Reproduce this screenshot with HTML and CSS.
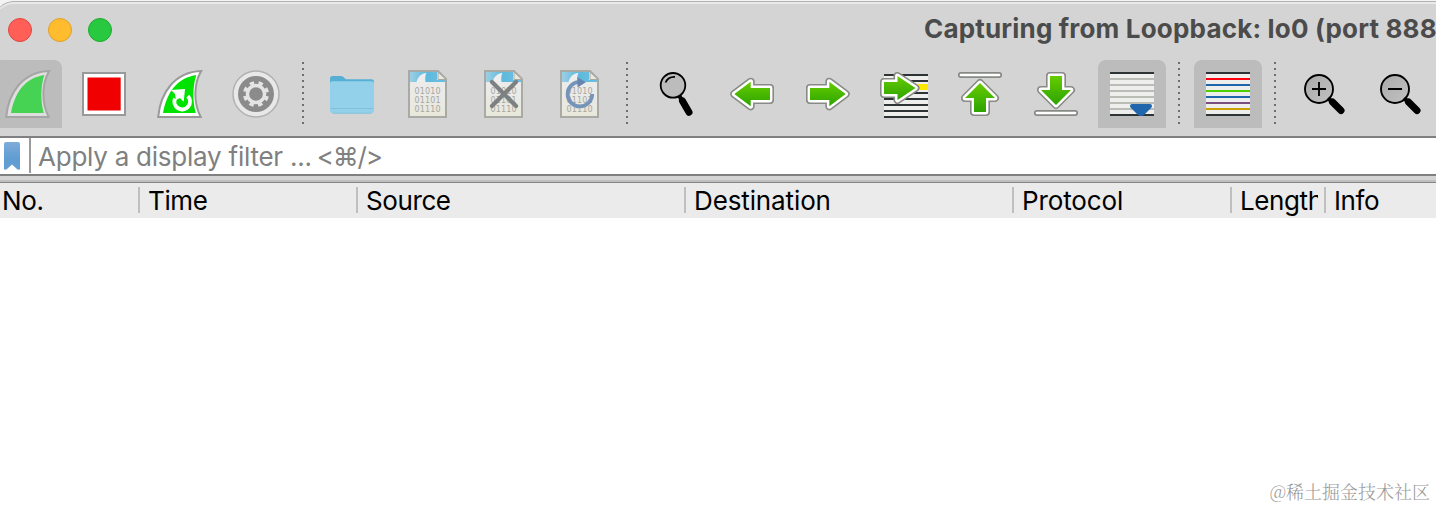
FILE: index.html
```html
<!DOCTYPE html>
<html lang="en">
<head>
<meta charset="utf-8">
<title>Capturing from Loopback: lo0</title>
<link rel="stylesheet" href="styles.css">
</head>
<body>
<svg class="defs" width="0" height="0" aria-hidden="true">
  <defs>
    <linearGradient id="green" x1="0" y1="0" x2="0" y2="1"><stop offset="0" stop-color="#66cc00"/><stop offset="1" stop-color="#2ca300"/></linearGradient>
    <linearGradient id="lens" x1="0" y1="0" x2="1" y2="1"><stop offset="0" stop-color="#a9a9a9"/><stop offset="1" stop-color="#c2c2c2"/></linearGradient>
    <linearGradient id="paper" x1="0" y1="0" x2="0" y2="1"><stop offset="0" stop-color="#ececec"/><stop offset=".5" stop-color="#eaeae8"/><stop offset="1" stop-color="#e8e8d9"/></linearGradient>
    <linearGradient id="sea" x1="0" y1="0" x2="1" y2="0"><stop offset="0" stop-color="#9dcfe4"/><stop offset=".6" stop-color="#5eb9dd"/><stop offset="1" stop-color="#67bddf"/></linearGradient>
    <linearGradient id="mark" x1="0" y1="0" x2="0" y2="1"><stop offset="0" stop-color="#7fabd9"/><stop offset=".6" stop-color="#5f9dd2"/><stop offset="1" stop-color="#669fd2"/></linearGradient>
    <g id="doc">
      <path d="M15 11H44L52 19V57H15Z" fill="url(#paper)"/>
      <path d="M16 12H43V22H16Z" fill="url(#sea)"/><path d="M43 20H51V22H43Z" fill="#67bddf"/>
      <path d="M22.5 22C24 17 27 13.5 32.5 12.8C31 16 31 19 31.5 22Z" fill="#eee"/>
      <path d="M15 11H44L52 19V57H15Z" fill="none" stroke="#a9aaa5" stroke-width="2"/>
      <path d="M44 12V19.5H52Z" fill="#e8e8df" stroke="#a9aaa5"/>
      <g class="bits"><text x="20.5" y="34.2" textLength="26">01010</text><text x="20.5" y="43.2" textLength="26">01101</text><text x="20.5" y="52.2" textLength="26">01110</text></g>
    </g>
    <path id="arr" d="M16 28H35.3V21.7L51.7 34L35.3 46.3V40H16Z"/>
    <path id="go" d="M14 22H27.5V16L45.5 28L27.5 40V34H14Z"/>
    <path id="up" d="M34 23L49 38H40V52H28V38H19Z"/>
    <path id="down" d="M34 45L49 30H40V16H28V30H19Z"/>
    <path id="fin" d="M12.2 57C14.5 32 29 12 55.2 11C47.5 24 47.5 43 54.7 57Z"/>
  </defs>
</svg>
<main class="window">
  <header class="titlebar">
    <span class="light red"></span><span class="light yellow"></span><span class="light green"></span>
    <h1 class="title">Capturing from Loopback: lo0 (port 888</h1>
  </header>
  <nav class="toolbar">
    <button class="tool on"><svg viewBox="0 0 68 68"><use href="#fin" fill="#dedede" stroke="#a5a5a5" stroke-width="2"/><path d="M17 53C21 32 31 18 50.3 15C46.5 27 46.5 41 49.8 53Z" fill="#46d252"/></svg></button>
    <button class="tool"><svg viewBox="0 0 68 68"><path d="M13 13H55V55H13Z" fill="#fff" stroke="#999" stroke-width="2"/><path d="M17.5 17.5H50.7V50.5H17.5Z" fill="#f00000"/></svg></button>
    <button class="tool"><svg viewBox="0 0 68 68"><use href="#fin" fill="#fff" stroke="#999" stroke-width="2"/><path d="M17 53C21 32 31 18 50.3 15C46.5 27 46.5 41 49.8 53Z" fill="#00e300"/><path d="M41.8 36.2A7.8 7.8 0 1 1 29 38.5" fill="none" stroke="#fff" stroke-width="4"/><path d="M25 30L39 29L37.7 41.8L34 38L30 40L29 34Z" fill="#fff"/></svg></button>
    <button class="tool"><svg viewBox="0 0 68 68"><circle cx="34" cy="34" r="23" fill="#e8e8e8" stroke="#b1b1b1" stroke-width="1.5"/><circle cx="34" cy="34" r="18" fill="#8b8b8b"/><circle cx="34" cy="34" r="8.6" fill="none" stroke="#e4e4e4" stroke-width="3.5"/><circle cx="34" cy="34" r="11.3" fill="none" stroke="#e4e4e4" stroke-width="3.4" stroke-dasharray="4.4 4.475" stroke-dashoffset="-2.2"/></svg></button>
    <i class="divider"></i>
    <button class="tool"><svg viewBox="0 0 68 68"><path d="M12 18.5Q12 16 14.5 16H23Q25 16 26.5 18Q27.5 19.3 29 19.3H53.5Q56 19.3 56 22V30H12Z" fill="#57b0d4"/><path d="M12 24Q12 21.3 14.5 21.3H53.5Q56 21.3 56 24V50.5Q56 53.3 53 53.3H15Q12 53.3 12 50.5Z" fill="#92d1e9"/><path d="M12.5 48.5H55.5M14.5 53.3H53.5" fill="none" stroke="#7cbcd7" stroke-width=".8"/></svg></button>
    <button class="tool"><svg viewBox="0 0 68 68"><use href="#doc"/></svg></button>
    <button class="tool"><svg viewBox="0 0 68 68"><use href="#doc"/><path d="M22 22L46 46M46 22L22 46" stroke="#7d8080" stroke-width="4.2" stroke-linecap="round"/></svg></button>
    <button class="tool"><svg viewBox="0 0 68 68"><use href="#doc"/><path d="M46.2 34A12.3 12.3 0 1 1 34 21.8" fill="none" stroke="#7694ba" stroke-width="3.8"/><path d="M31.5 17L39.8 22.3L31.5 27.5Z" fill="#6685b0"/></svg></button>
    <i class="divider"></i>
    <button class="tool"><svg viewBox="0 0 68 68"><circle cx="31" cy="25.3" r="12.3" fill="#bcbcbc" stroke="#000" stroke-width="1.8"/><path d="M23.5 22.5Q26 16.5 33 16.8" fill="none" stroke="#000" stroke-width="1.8"/><path d="M37.5 36L40 41" stroke="#000" stroke-width="4"/><path d="M40.5 41L47 52.3" stroke="#000" stroke-width="7" stroke-linecap="round"/></svg></button>
    <button class="tool"><svg viewBox="0 0 68 68"><g transform="matrix(-1 0 0 1 68 0)"><use href="#arr" class="edge"/><use href="#arr" class="rim"/><use href="#arr" fill="url(#green)"/></g></svg></button>
    <button class="tool"><svg viewBox="0 0 68 68"><use href="#arr" class="edge"/><use href="#arr" class="rim"/><use href="#arr" fill="url(#green)"/></svg></button>
    <button class="tool"><svg viewBox="0 0 68 68"><path d="M14 14H58V58H14Z" fill="#eeeeec"/><path d="M14 15H58M14 21H58M14 33H58M14 39H58M14 45H58M14 51H58M14 57H58" stroke="#2e3436" stroke-width="2"/><path d="M40 24H58V30H40Z" fill="#ffe600"/><use href="#go" class="edge"/><use href="#go" class="rim"/><use href="#go" fill="url(#green)"/></svg></button>
    <button class="tool"><svg viewBox="0 0 68 68"><rect x="12.8" y="12.8" width="42.4" height="4.4" rx="2.2" fill="#fff" stroke="#888a85" stroke-width="1.7"/><use href="#up" class="edge"/><use href="#up" class="rim"/><use href="#up" fill="url(#green)"/></svg></button>
    <button class="tool"><svg viewBox="0 0 68 68"><rect x="12.8" y="50.8" width="42.4" height="4.4" rx="2.2" fill="#fff" stroke="#888a85" stroke-width="1.7"/><use href="#down" class="edge"/><use href="#down" class="rim"/><use href="#down" fill="url(#green)"/></svg></button>
    <button class="tool on"><svg viewBox="0 0 68 68"><path d="M12 12H56V56H12Z" fill="#eeeeec"/><path d="M12 19H56M12 25H56M12 31H56M12 37H56M12 43H56M12 49H56" stroke="#babdb6" stroke-width="2"/><path d="M12 13H56M12 55H56" stroke="#2e3436" stroke-width="2"/><path d="M32 46Q32 44 34 44H52Q54 44 54 46Q54 47 53 48L46 55Q43 57 40 55L33 48Q32 47 32 46Z" fill="#2066ad"/></svg></button>
    <i class="divider"></i>
    <button class="tool on"><svg viewBox="0 0 68 68" stroke-width="2"><path d="M12 12H56V56H12Z" fill="#eeeeec"/><path d="M12 13H56M12 55H56" stroke="#2e3436"/><path d="M12 19H56" stroke="#ff0010"/><path d="M12 25H56M12 37H56" stroke="#2066ad"/><path d="M12 31H56" stroke="#4fd000"/><path d="M12 43H56" stroke="#7a4f80"/><path d="M12 49H56" stroke="#cca000"/></svg></button>
    <i class="divider"></i>
    <button class="tool"><svg viewBox="0 0 68 68"><circle cx="29" cy="29" r="14" fill="url(#lens)" stroke="#000" stroke-width="1.9"/><path d="M22 29H36M29 22V36" stroke="#000" stroke-width="1.9"/><path d="M38 38L42 42" stroke="#000" stroke-width="4"/><path d="M42.5 42L51 50.5" stroke="#000" stroke-width="7" stroke-linecap="round"/></svg></button>
    <button class="tool"><svg viewBox="0 0 68 68"><circle cx="29" cy="29" r="14" fill="url(#lens)" stroke="#000" stroke-width="1.9"/><path d="M22 29H36" stroke="#000" stroke-width="1.9"/><path d="M38 38L42 42" stroke="#000" stroke-width="4"/><path d="M42.5 42L51 50.5" stroke="#000" stroke-width="7" stroke-linecap="round"/></svg></button>
  </nav>
  <section class="filter">
    <svg class="bookmark" viewBox="0 0 16 28"><path d="M0 2Q0 0 2 0H14Q16 0 16 2V27Q15 28.5 13 27L8 22.5L3 27Q1 28.5 0 27Z" fill="url(#mark)"/></svg>
    <span class="placeholder">Apply a display filter ... <span class="shortcut">&lt;⌘/&gt;</span></span>
  </section>
  <div class="splitter"></div>
  <section class="columns">
    <span class="col no">No.</span><span class="col time">Time</span><span class="col source">Source</span><span class="col dest">Destination</span><span class="col proto">Protocol</span><span class="col length"><span class="clip">Length</span></span><span class="col info">Info</span>
  </section>
  <section class="packets"><span class="credit">@稀土掘金技术社区</span></section>
</main>
</body>
</html>
```
FILE: styles.css
```css
* { box-sizing: border-box; }
body { margin: 0; height: 508px; overflow: hidden; background: #f4f4f4; font-family: Inter, "DejaVu Sans", sans-serif; }
.defs { display: block; height: 0; }
.window { display: flex; flex-direction: column; margin: 1px 0 0 -6px; width: 1442px; height: 507px; overflow: hidden; background: #d4d4d4; border-top: 1px solid #b2b2b2; border-radius: 20px 0 0 0; box-shadow: inset 0 2px 0 #e9e9e9; }
.titlebar { display: flex; align-items: center; flex: none; height: 58px; padding: 0 0 2px 14px; gap: 16px; }
.light { flex: none; width: 24px; height: 24px; border-radius: 50%; border: 1px solid; }
.red { background: #ff5f57; border-color: #e2463f; }
.yellow { background: #febc2e; border-color: #e0a028; }
.green { background: #28c840; border-color: #1dad2b; }
.title { margin: 0 0 2px 796px; font-size: 26px; line-height: 32px; font-weight: 700; letter-spacing: 0.18px; white-space: nowrap; color: #4b4b4b; }
.toolbar { display: flex; flex: none; height: 76px; gap: 8px; }
.tool { flex: none; width: 68px; height: 68px; padding: 0; border: 0; background: none; }
.tool svg { display: block; width: 68px; height: 68px; }
.on { background: #bcbcbc; border-radius: 8px 8px 0 0; }
.divider { flex: none; width: 12px; height: 64px; margin-top: 2px; background: repeating-linear-gradient(to bottom, #6e6e6e 0 2px, transparent 2px 6px) 4px 0 / 2px 62px no-repeat; }
.edge { fill: #888a85; stroke: #888a85; stroke-width: 8px; stroke-linejoin: round; }
.rim { fill: #fff; stroke: #fff; stroke-width: 4.8px; stroke-linejoin: round; }
.bits { font: 8px "DejaVu Sans", sans-serif; fill: #a7a7a0; }
.filter { display: flex; flex: none; height: 40px; padding-left: 10px; background: #fff; border-top: 2px solid #808080; border-bottom: 2px solid #808080; }
.bookmark { flex: none; width: 16px; height: 28px; margin: 4px 9px 0 0; }
.placeholder { height: 35px; padding-left: 7px; border-left: 2px solid #9b9b9f; font-size: 26px; line-height: 38px; letter-spacing: -0.24px; white-space: nowrap; color: #808080; }
.shortcut { margin-left: -2px; letter-spacing: -1.2px; }
.splitter { flex: none; height: 7px; background: #d4d4d4; border-bottom: 1px solid #858585; box-shadow: inset 0 -2px #bfbfbf; }
.columns { display: flex; flex: none; height: 35px; padding: 4px 0 5px 6px; background: #ebebeb; }
.col { flex: none; height: 26px; padding-left: 8px; border-right: 2px solid #bfbfbf; font-size: 26px; line-height: 27px; letter-spacing: -0.4px; white-space: nowrap; color: #000; }
.no { width: 140px; padding-left: 2px; }
.time { width: 218px; }
.source, .dest { width: 328px; }
.dest, .proto { letter-spacing: -0.12px; }
.proto { width: 218px; }
.length { width: 94px; }
.clip { display: block; width: 78px; height: 31px; overflow: hidden; }
.info { width: 110px; border: 0; }
.packets { display: flex; flex: 1; justify-content: flex-end; align-items: flex-end; padding: 0 6px 5px 0; background: #fff; }
.credit { font: 300 18px/24px "Noto Serif CJK SC", "Noto Sans CJK SC", sans-serif; color: #999; }
```
